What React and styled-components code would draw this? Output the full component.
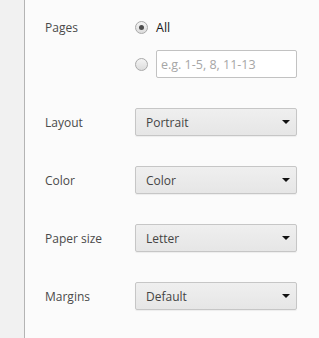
import React from "react";
import styled, { createGlobalStyle } from "styled-components";

const Global = createGlobalStyle`
  html, body { margin: 0; padding: 0; }
  body { font-family: "Open Sans", "Noto Sans", Arial, sans-serif; background: #fbfbfb; }
`;

const Page = styled.div`
  display: flex;
  width: 319px;
  height: 338px;
  overflow: hidden;
`;

const Sidebar = styled.div`
  width: 24px;
  flex: none;
  background: #f1f1f1;
  border-right: 1px solid #b4b4b4;
`;

const Main = styled.div`
  flex: 1;
  background: #fbfbfb;
  padding: 13px 0 0 20px;
  display: flex;
  flex-direction: column;
  gap: 30px;
`;

const Section = styled.div`
  display: grid;
  grid-template-columns: 90px 162px;
  align-items: start;
`;

const Label = styled.div`
  height: 28px;
  line-height: 29px;
  font-size: 12px;
  color: #4a4a4a;
`;

const Options = styled.div`
  display: flex;
  flex-direction: column;
  gap: 9px;
`;

const OptionRow = styled.label`
  display: flex;
  align-items: center;
  height: 28px;
  gap: 8px;
  font-size: 12.5px;
  color: #1a1a1a;
`;

const Radio = styled.span`
  width: 13px;
  height: 13px;
  flex: none;
  box-sizing: border-box;
  border-radius: 50%;
  border: 1px solid #a9a9a9;
  background: linear-gradient(#f4f4f4, #dcdcdc);
  display: flex;
  align-items: center;
  justify-content: center;
  &::after {
    content: "";
    width: 5px;
    height: 5px;
    border-radius: 50%;
    background: ${(p) => (p.$checked ? "#4d4d4d" : "transparent")};
  }
`;

const TextInput = styled.input`
  width: 141px;
  height: 28px;
  box-sizing: border-box;
  border: 1px solid #c2c2c2;
  border-radius: 2px;
  background: #fff;
  padding: 0 0 0 4px;
  font-family: inherit;
  font-size: 12.5px;
  color: #333;
  outline: none;
  &::placeholder { color: #a6a6a6; }
`;

const Select = styled.div`
  width: 162px;
  height: 28px;
  box-sizing: border-box;
  border: 1px solid #c6c6c6;
  border-radius: 2px;
  background: linear-gradient(#efefef, #e6e6e6);
  box-shadow: 0 1px 1px rgba(0, 0, 0, 0.06);
  display: flex;
  align-items: center;
  justify-content: space-between;
  padding: 0 6px 0 10px;
  font-size: 12px;
  color: #444;
`;

const Arrow = styled.svg`
  width: 8px;
  height: 4px;
  flex: none;
`;

const selects = [
  ["Layout", "Portrait"],
  ["Color", "Color"],
  ["Paper size", "Letter"],
  ["Margins", "Default"],
];

export default function App() {
  return (
    <>
      <Global />
      <Page>
        <Sidebar />
        <Main>
          <Section>
            <Label>Pages</Label>
            <Options>
              <OptionRow>
                <Radio $checked />
                All
              </OptionRow>
              <OptionRow>
                <Radio />
                <TextInput placeholder="e.g. 1-5, 8, 11-13" />
              </OptionRow>
            </Options>
          </Section>
          {selects.map(([label, value]) => (
            <Section key={label}>
              <Label>{label}</Label>
              <Select>
                {value}
                <Arrow viewBox="0 0 8 4">
                  <path d="M0 0H8L4 4Z" fill="#111" />
                </Arrow>
              </Select>
            </Section>
          ))}
        </Main>
      </Page>
    </>
  );
}
